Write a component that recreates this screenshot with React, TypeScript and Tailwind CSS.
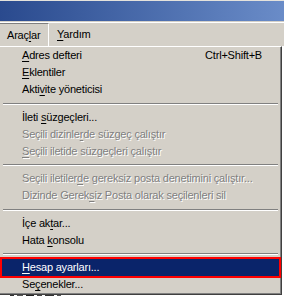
import React from "react";

type Item =
  | { kind: "item"; text: string; k: number; disabled?: boolean; shortcut?: string; active?: boolean }
  | { kind: "sep"; h: number };

const items: Item[] = [
  { kind: "item", text: "Adres defteri", k: 0, shortcut: "Ctrl+Shift+B" },
  { kind: "item", text: "Eklentiler", k: 0 },
  { kind: "item", text: "Aktivite yöneticisi", k: 4 },
  { kind: "sep", h: 11 },
  { kind: "item", text: "İleti süzgeçleri...", k: 6 },
  { kind: "item", text: "Seçili dizinlerde süzgeç çalıştır", k: 14, disabled: true },
  { kind: "item", text: "Seçili iletide süzgeçleri çalıştır", k: 0, disabled: true },
  { kind: "sep", h: 10 },
  { kind: "item", text: "Seçili iletilerde gereksiz posta denetimini çalıştır...", k: 15, disabled: true },
  { kind: "item", text: "Dizinde Gereksiz Posta olarak seçilenleri sil", k: 13, disabled: true },
  { kind: "sep", h: 11 },
  { kind: "item", text: "İçe aktar...", k: 6 },
  { kind: "item", text: "Hata konsolu", k: 5 },
  { kind: "sep", h: 10 },
  { kind: "item", text: "Hesap ayarları...", k: 0, active: true },
  { kind: "item", text: "Seçenekler...", k: 2 },
];

function Label({ text, k }: { text: string; k: number }) {
  return (
    <span>
      {text.slice(0, k)}
      <span className="underline underline-offset-[2px]">{text.slice(k, k + 1)}</span>
      {text.slice(k + 1)}
    </span>
  );
}

export default function App() {
  return (
    <div className="relative w-[284px] h-[296px] overflow-hidden bg-[#d4d0c8] font-['Liberation_Sans',Arial,sans-serif] text-[11px] tracking-[-0.2px] leading-none text-black">
      {/* window frame */}
      <div className="flex flex-col h-full">
        <div className="h-[1px] bg-[#e4e2dc]" />
        <div className="h-[20px] bg-gradient-to-r from-[#2a4a8e] to-[#6a8cc8]" />
        <div className="h-[1px] bg-[#d4d0c8]" />
        <div className="h-[1px] bg-white" />
        <div className="h-[23px] flex items-stretch">
          <div className="w-[49px] border-t border-t-[#808080] border-r border-r-white flex items-center pl-[7px]">
            <span>
              Araç<span className="underline underline-offset-[2px]">l</span>ar
            </span>
          </div>
          <div className="flex items-center pl-[8px]">
            <span>
              <span className="underline underline-offset-[2px]">Y</span>ardım
            </span>
          </div>
        </div>
        <div className="flex-1 bg-white flex flex-col justify-end">
          <div className="h-[2px] flex gap-[3px] pl-[10px]">
            <div className="w-[4px] bg-[#333]" />
            <div className="w-[6px] bg-[#555]" />
            <div className="w-[8px] bg-[#222]" />
            <div className="w-[5px] bg-[#444]" />
            <div className="w-[9px] bg-[#333]" />
            <div className="w-[4px] bg-[#555]" />
          </div>
        </div>
      </div>

      {/* dropdown menu */}
      <div className="absolute left-0 top-[46px] w-[282px] border-t border-t-white border-r border-r-[#404040] border-b border-b-[#404040] bg-[#d4d0c8]">
        <div className="border-r border-r-[#808080] border-b border-b-[#808080] pl-[2px] pr-[1px]">
          {items.map((it, i) => {
            if (it.kind === "sep") {
              return (
                <div key={i} className="flex flex-col justify-center px-[1px]" style={{ height: it.h }}>
                  <div className="h-[1px] bg-[#808080]" />
                  <div className="h-[1px] bg-white" />
                </div>
              );
            }
            const cls = it.active
              ? "bg-[#0a246a] text-white outline-2 outline-[#ff0000]"
              : it.disabled
              ? "text-[#808080] [text-shadow:1px_1px_0_#ffffff]"
              : "";
            return (
              <div
                key={i}
                className={`relative h-[17px] flex items-center justify-between pl-[20px] pr-[17px] whitespace-nowrap ${cls}`}
              >
                <Label text={it.text} k={it.k} />
                {it.shortcut && <span>{it.shortcut}</span>}
              </div>
            );
          })}
        </div>
      </div>
    </div>
  );
}
